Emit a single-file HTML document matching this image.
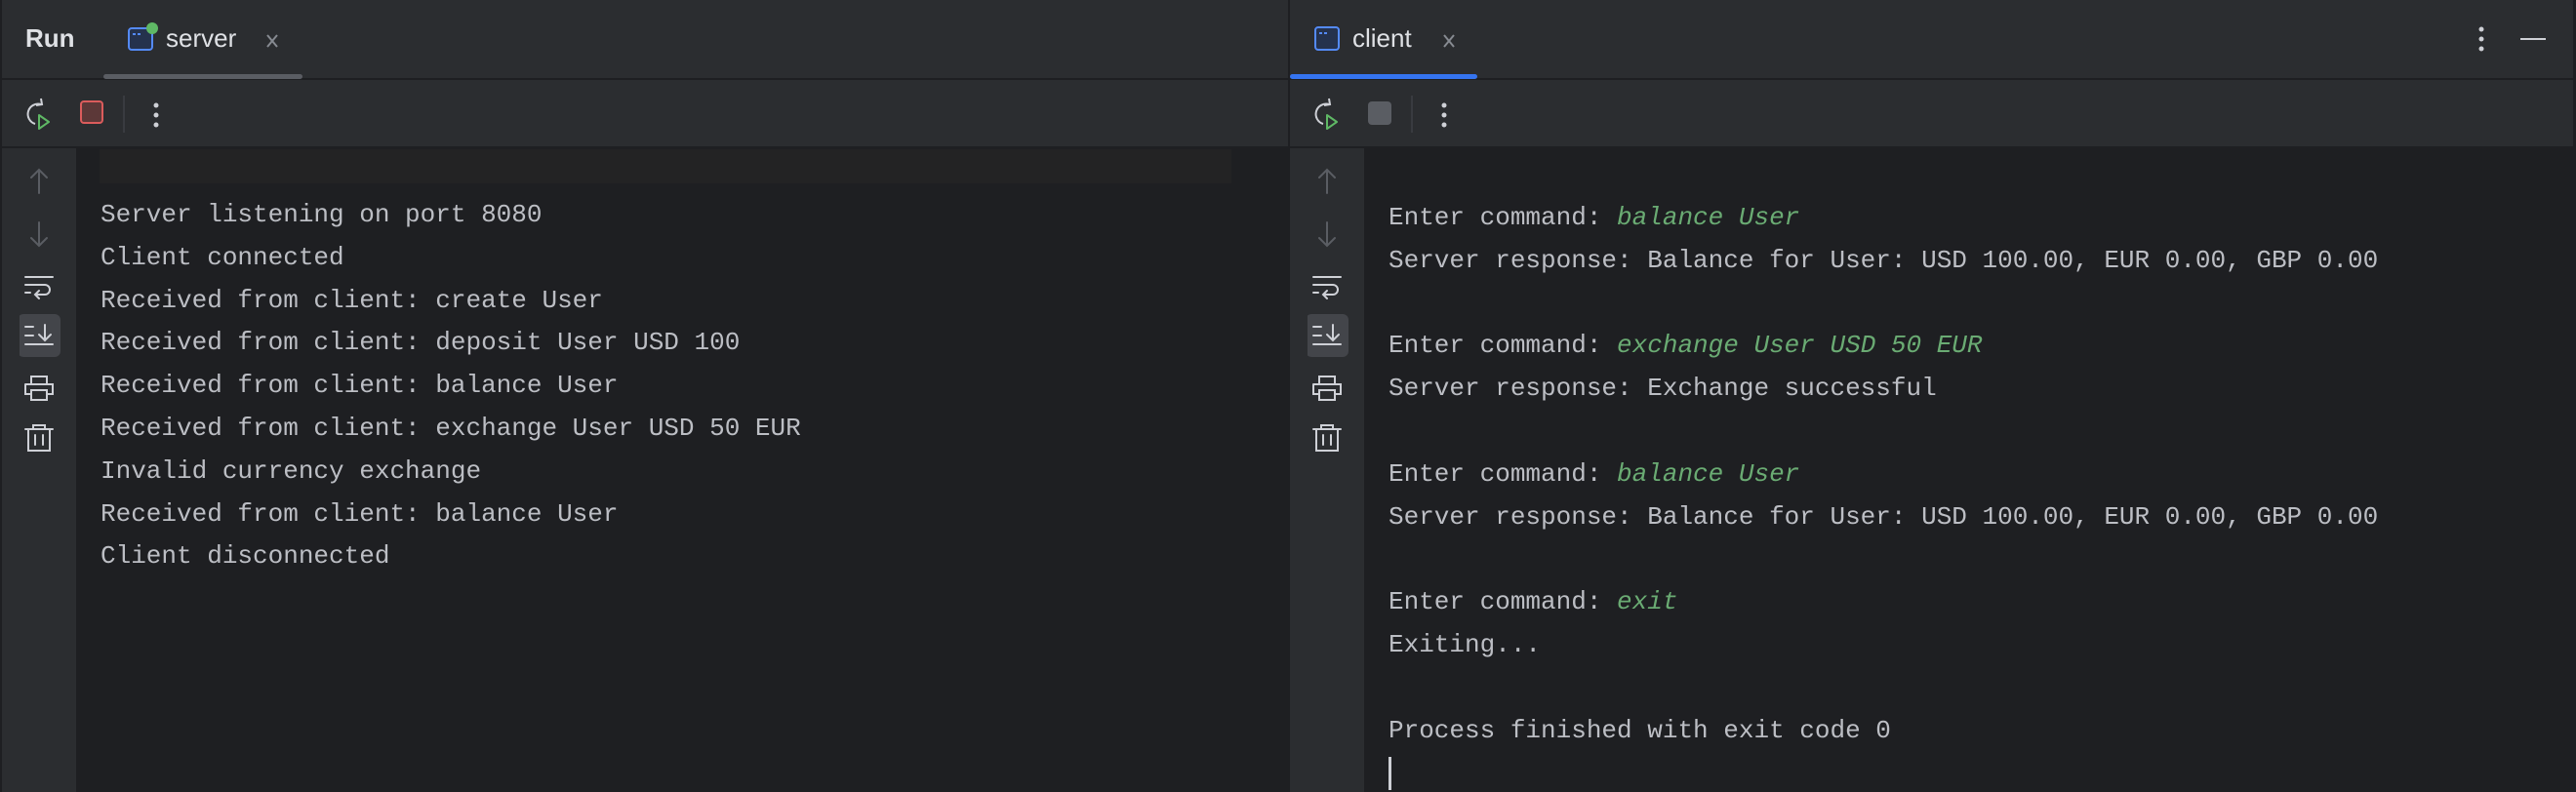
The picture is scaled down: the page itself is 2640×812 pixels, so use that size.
<!DOCTYPE html>
<html><head><meta charset="utf-8"><style>
*{margin:0;padding:0;box-sizing:border-box}
body{width:2640px;height:812px;background:#1e1f22;position:relative;overflow:hidden;font-family:"Liberation Sans",sans-serif}
.abs{position:absolute}
.bar{background:#2b2d30}
.mono{font-family:"Liberation Mono",monospace;font-size:26px;color:#bcbec4;white-space:pre;line-height:43.8px}
.g{color:#6aab73;font-style:italic}
.tabt{font-size:26px;color:#dfe1e5}
</style></head><body>
<div class="abs bar" style="left:0;top:0;width:2640px;height:80px"></div>
<div class="abs" style="left:0;top:80px;width:2640px;height:2px;background:#1e1f22"></div>
<div class="abs bar" style="left:0;top:82px;width:2640px;height:68px"></div>
<div class="abs" style="left:1320px;top:0;width:2px;height:812px;background:#1e1f22"></div>
<div class="abs" style="left:0;top:0;width:2px;height:812px;background:#1e1f22"></div>
<div class="abs" style="left:2637px;top:0;width:3px;height:812px;background:#1e1f22"></div>

<div class="abs tabt" style="left:26px;top:24px;font-weight:bold">Run</div>
<svg class="abs" style="left:130px;top:22px" width="36" height="32"><rect x="2" y="7" width="24" height="22" rx="3" fill="#25324d" stroke="#548af7" stroke-width="2"/><rect x="6" y="12" width="3" height="2" fill="#548af7"/><rect x="11" y="12" width="3" height="2" fill="#548af7"/><circle cx="26" cy="7" r="6" fill="#5fb865"/></svg>
<div class="abs tabt" style="left:170px;top:24px">server</div>
<svg class="abs" style="left:272px;top:34px" width="14" height="16"><path d="M2 2 L12 14 M12 2 L2 14" stroke="#868a91" stroke-width="2"/></svg>
<div class="abs" style="left:106px;top:76px;width:204px;height:5px;border-radius:3px;background:#5a5d63"></div>

<svg class="abs" style="left:1346px;top:24px" width="32" height="32"><rect x="2" y="4" width="24" height="23" rx="3" fill="#25324d" stroke="#548af7" stroke-width="2"/><rect x="6" y="9" width="3" height="2" fill="#548af7"/><rect x="11" y="9" width="3" height="2" fill="#548af7"/></svg>
<div class="abs tabt" style="left:1386px;top:24px">client</div>
<svg class="abs" style="left:1478px;top:34px" width="14" height="16"><path d="M2 2 L12 14 M12 2 L2 14" stroke="#868a91" stroke-width="2"/></svg>
<div class="abs" style="left:1322px;top:76px;width:192px;height:5px;border-radius:3px;background:#3574f0"></div>

<svg class="abs" style="left:2530px;top:24px" width="90" height="34"><circle cx="13" cy="6" r="2.5" fill="#ced0d6"/><circle cx="13" cy="16" r="2.5" fill="#ced0d6"/><circle cx="13" cy="26" r="2.5" fill="#ced0d6"/><rect x="53" y="15" width="26" height="2" fill="#ced0d6"/></svg>

<svg class="abs" style="left:24px;top:98px" width="120" height="40">
<path d="M18 9 A10 10 0 1 0 12 29" fill="none" stroke="#ced0d6" stroke-width="2"/><path d="M18 3 L19 9 L13 10" fill="none" stroke="#ced0d6" stroke-width="2"/>
<path d="M16 20 L26 27 L16 34 Z" fill="none" stroke="#5fb865" stroke-width="2" stroke-linejoin="round"/>
<rect x="59" y="6" width="22" height="22" rx="3" fill="#5c3838" stroke="#db5c5c" stroke-width="2"/>
<rect x="102" y="0" width="2" height="38" fill="#393b40"/>
</svg>
<svg class="abs" style="left:154px;top:104px" width="12" height="28"><circle cx="6" cy="4" r="2.5" fill="#ced0d6"/><circle cx="6" cy="14" r="2.5" fill="#ced0d6"/><circle cx="6" cy="24" r="2.5" fill="#ced0d6"/></svg>
<svg class="abs" style="left:1344px;top:98px" width="120" height="40">
<path d="M18 9 A10 10 0 1 0 12 29" fill="none" stroke="#ced0d6" stroke-width="2"/><path d="M18 3 L19 9 L13 10" fill="none" stroke="#ced0d6" stroke-width="2"/>
<path d="M16 20 L26 27 L16 34 Z" fill="none" stroke="#5fb865" stroke-width="2" stroke-linejoin="round"/>
<rect x="58" y="6" width="24" height="24" rx="4" fill="#5a5d63"/>
<rect x="102" y="0" width="2" height="38" fill="#393b40"/>
</svg>
<svg class="abs" style="left:1474px;top:104px" width="12" height="28"><circle cx="6" cy="4" r="2.5" fill="#ced0d6"/><circle cx="6" cy="14" r="2.5" fill="#ced0d6"/><circle cx="6" cy="24" r="2.5" fill="#ced0d6"/></svg>

<div class="abs bar" style="left:2px;top:152px;width:76px;height:660px"></div>
<div class="abs bar" style="left:1322px;top:152px;width:76px;height:660px"></div>
<svg class="abs" style="left:20px;top:170px" width="44" height="300">
<g fill="none" stroke="#5a5d63" stroke-width="2" stroke-linecap="round">
<path d="M20 4 V28 M12 12 L20 4 L28 12"/>
<path d="M20 58 V82 M12 74 L20 82 L28 74"/></g>
<g fill="none" stroke="#ced0d6" stroke-width="2" stroke-linecap="round">
<path d="M6 114 H34 M6 122 H26 a5 5 0 0 1 0 10 H16 M20 128 L16 132 L20 136 M6 130 H11"/></g>
<rect x="-2" y="152" width="44" height="44" rx="6" fill="#43454a"/>
<g fill="none" stroke="#ced0d6" stroke-width="2" stroke-linecap="round">
<path d="M6 165 H14 M6 174 H14 M6 183 H34 M26 163 V179 M20 173 L26 179 L32 173"/>
<path d="M12 224 V216 H28 V224 M6 224 H34 V234 H28 M12 234 H6 V224 M12 230 H28 V240 H12 Z"/>
<path d="M6 270 H34 M14 270 V266 H26 V270 M9 270 V292 H31 V270 M16 276 V286 M24 276 V286"/></g>
</svg>
<svg class="abs" style="left:1340px;top:170px" width="44" height="300">
<g fill="none" stroke="#5a5d63" stroke-width="2" stroke-linecap="round">
<path d="M20 4 V28 M12 12 L20 4 L28 12"/>
<path d="M20 58 V82 M12 74 L20 82 L28 74"/></g>
<g fill="none" stroke="#ced0d6" stroke-width="2" stroke-linecap="round">
<path d="M6 114 H34 M6 122 H26 a5 5 0 0 1 0 10 H16 M20 128 L16 132 L20 136 M6 130 H11"/></g>
<rect x="-2" y="152" width="44" height="44" rx="6" fill="#43454a"/>
<g fill="none" stroke="#ced0d6" stroke-width="2" stroke-linecap="round">
<path d="M6 165 H14 M6 174 H14 M6 183 H34 M26 163 V179 M20 173 L26 179 L32 173"/>
<path d="M12 224 V216 H28 V224 M6 224 H34 V234 H28 M12 234 H6 V224 M12 230 H28 V240 H12 Z"/>
<path d="M6 270 H34 M14 270 V266 H26 V270 M9 270 V292 H31 V270 M16 276 V286 M24 276 V286"/></g>
</svg>

<div class="abs" style="left:102px;top:153px;width:1160px;height:35px;background:#232324"></div>
<div class="abs mono" style="left:103px;top:199px">Server listening on port 8080
Client connected
Received from client: create User
Received from client: deposit User USD 100
Received from client: balance User
Received from client: exchange User USD 50 EUR
Invalid currency exchange
Received from client: balance User
Client disconnected</div>

<div class="abs mono" style="left:1423px;top:202px">Enter command: <span class="g">balance User</span>
Server response: Balance for User: USD 100.00, EUR 0.00, GBP 0.00

Enter command: <span class="g">exchange User USD 50 EUR</span>
Server response: Exchange successful

Enter command: <span class="g">balance User</span>
Server response: Balance for User: USD 100.00, EUR 0.00, GBP 0.00

Enter command: <span class="g">exit</span>
Exiting...

Process finished with exit code 0</div>
<div class="abs" style="left:1423px;top:776px;width:3px;height:34px;background:#ced0d6"></div>
</body></html>
